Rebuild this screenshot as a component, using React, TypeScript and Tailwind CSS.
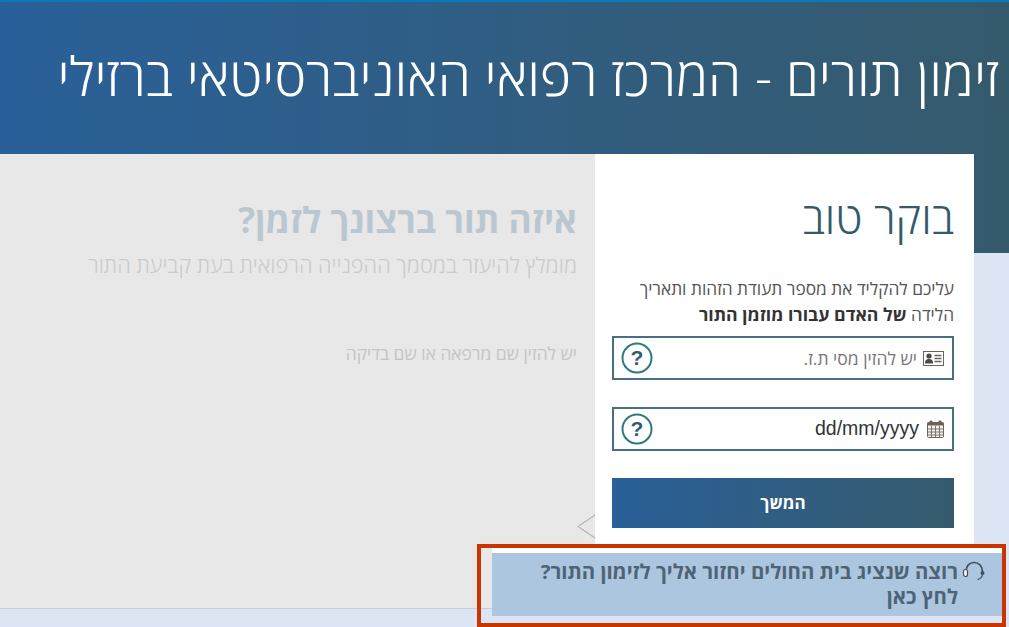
import React from "react";

const font = { fontFamily: '"Open Sans", "Liberation Sans", sans-serif' };

function Help() {
  return (
    <svg width="32" height="32" viewBox="0 0 32 32" className="shrink-0">
      <circle cx="16" cy="16" r="14.5" fill="none" stroke="#2f7a7c" strokeWidth="2" />
      <text x="16" y="23" textAnchor="middle" fontSize="21" fontWeight="700" fill="#2f5f6e" fontFamily="Liberation Sans">?</text>
    </svg>
  );
}

function IdIcon() {
  return (
    <svg width="21" height="15" viewBox="0 0 21 15" className="shrink-0">
      <rect x="0.5" y="0.5" width="20" height="14" fill="none" stroke="#6b6259" />
      <circle cx="6" cy="5" r="2.6" fill="#4a4a4a" />
      <path d="M2 12.500c0-3.500 1.500-4.500 4-4.500s4 1 4 4.500z" fill="#4a4a4a" />
      <path d="M11.500 4.500h7M11.500 7.500h7M11.500 10.500h7" stroke="#666" strokeWidth="1.300" />
    </svg>
  );
}

function CalIcon() {
  return (
    <svg width="17" height="18" viewBox="0 0 17 18" className="shrink-0">
      <rect x="0.5" y="2.500" width="16" height="15" rx="1" fill="#f4f1ee" stroke="#6b6259" />
      <rect x="0.5" y="2.500" width="16" height="3" fill="#6b6259" />
      <rect x="2.500" y="0.5" width="3" height="4" rx="1" fill="#6b6259" />
      <rect x="11.500" y="0.5" width="3" height="4" rx="1" fill="#6b6259" />
      <path d="M0.500 9h16M0.500 12h16M0.500 15h16M4.500 6v11M8.500 6v11M12.500 6v11" stroke="#7d756d" strokeWidth="1" />
    </svg>
  );
}

function HeadsetIcon() {
  return (
    <svg width="23" height="23" viewBox="0 0 23 23" className="shrink-0">
      <path d="M4 11.500C4 6 7.500 2.500 12 2.500s8.500 3.500 8.500 9" fill="none" stroke="#3f5160" strokeWidth="1.700" />
      <rect x="1.500" y="9.500" width="4" height="7" rx="2" fill="#f2f5f8" stroke="#3f5160" strokeWidth="1.200" />
      <circle cx="20.500" cy="13" r="2" fill="#3f5160" />
      <path d="M20.500 14.500c-.5 3-2.500 4.500-5 5" fill="none" stroke="#3f5160" strokeWidth="1.300" />
    </svg>
  );
}

export default function App() {
  return (
    <div dir="rtl" style={font} className="relative flex h-[627px] w-[1009px] flex-col overflow-hidden bg-[#dce5f3]">
      <header className="h-[253px] shrink-0 border-t-2 border-[#0b78b8] bg-gradient-to-r from-[#2a6099] to-[#355a6c] pr-[10px] pt-[35px]">
        <h1 className="whitespace-nowrap text-[53.400px] font-light leading-[78px] text-white">
          זימון תורים - המרכז רפואי האוניברסיטאי ברזילי
        </h1>
      </header>

      <main className="mr-[35px] -mt-[99px] flex h-[455px] shrink-0 border-b border-[#c3cfdf]">
        <section className="w-[379px] shrink-0 bg-white pl-[17px] pr-[20px] pt-[33px]">
          <h2 className="text-[44px] font-light leading-[60px] text-[#355a6c]">בוקר טוב</h2>
          <p className="mt-[29px] text-[17.300px] leading-[26px] text-[#555]">
            עליכם להקליד את מספר תעודת הזהות ותאריך הלידה <b className="text-[17.700px] font-bold leading-none text-[#333]">של האדם עבורו מוזמן התור</b>
          </p>
          <div className="mt-[8px] flex h-[44px] items-center gap-[6px] border-2 border-[#4a6e85] pl-[7px] pr-[8px]">
            <IdIcon />
            <span className="flex-1 text-[17.500px] text-[#777]">יש להזין מסי ת.ז.</span>
            <Help />
          </div>
          <div className="mt-[27px] flex h-[44px] items-center gap-[8px] border-2 border-[#4a6e85] pl-[7px] pr-[8px]">
            <CalIcon />
            <span className="flex-1 text-[19.500px] text-[#333]" style={{ fontFamily: '"Liberation Sans", sans-serif' }}>dd/mm/yyyy</span>
            <Help />
          </div>
          <button className="mt-[27px] block h-[50px] w-full bg-gradient-to-r from-[#2a6099] to-[#355a6c] text-[17px] font-bold text-white">
            המשך
          </button>
        </section>

        <section className="relative flex-1 bg-[#e8e8e8] pr-[18px] pt-[40px]">
          <h3 className="text-[35.300px] font-bold leading-[50px] text-[#bac7d0]">איזה תור ברצונך לזמן?</h3>
          <p className="mt-[6px] text-[21.800px] font-light leading-[30px] text-[#cbcbcb]">מומלץ להיעזר במסמך ההפנייה הרפואית בעת קביעת התור</p>
          <p className="mt-[61px] text-[17.400px] leading-[24px] text-[#c4c4c4]">יש להזין שם מרפאה או שם בדיקה</p>
          <svg width="19" height="25" viewBox="0 0 19 25" className="absolute bottom-[69px] right-[-1px]">
            <path d="M18 1 1 12.500 18 24" fill="none" stroke="#b5b5b5" strokeWidth="1.200" />
          </svg>
        </section>
      </main>

      <aside className="absolute left-[477px] top-[544px] h-[83px] w-[529px] border-[4px] border-[#c93400] pl-[11px]">
        <div className="bg-white pt-[5px]">
          <div className="h-[63px] bg-[#adc6df] pr-[17px] pt-[6px] text-[20.400px] font-bold leading-[25px] text-[#4e6476]">
            <div className="flex items-center gap-[4px]">
              <HeadsetIcon />
              <span className="whitespace-nowrap">רוצה שנציג בית החולים יחזור אליך לזימון התור?</span>
            </div>
            <div className="pr-[27px]">לחץ כאן</div>
          </div>
        </div>
      </aside>
    </div>
  );
}
